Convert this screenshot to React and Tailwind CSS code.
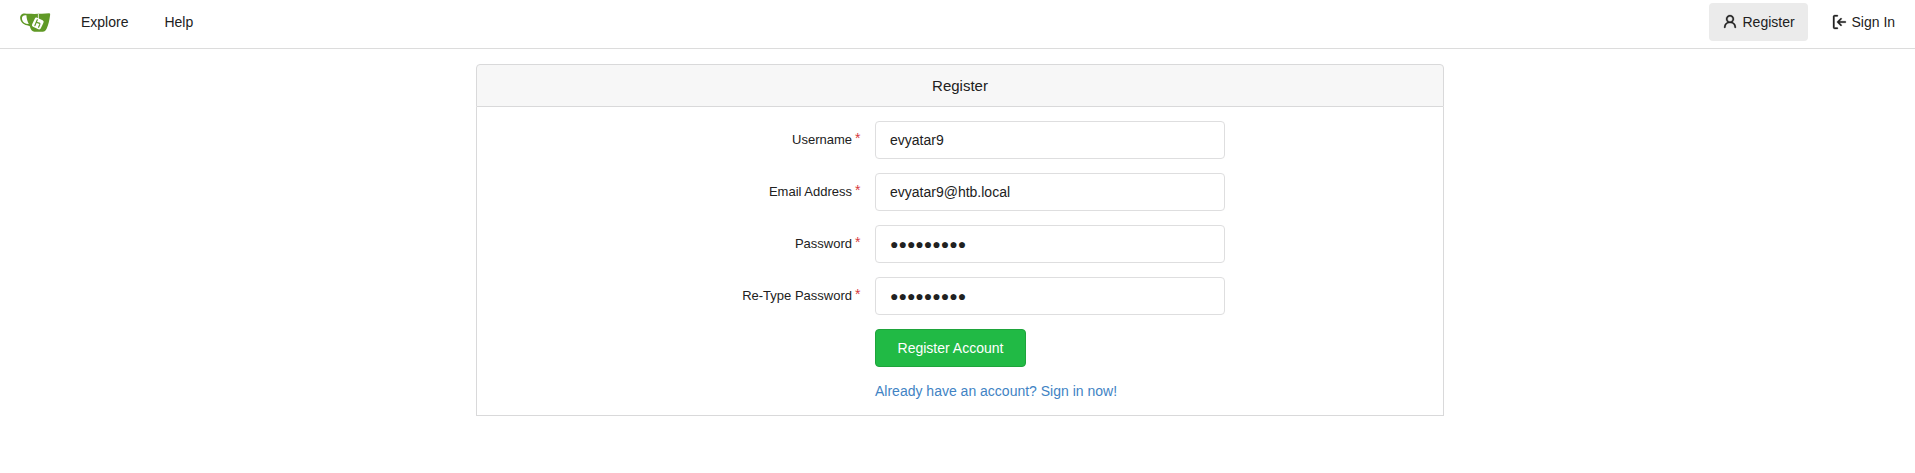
import React from "react";

function Logo() {
  return (
    <svg className="block" width="32" height="20" viewBox="0 0 32 20" aria-hidden="true">
      <path
        d="M5.8 1.6 C10 2 22 2.1 30.2 1.3 C31.2 1.3 31.3 2.2 31.1 3.3 C30.4 8.4 29.4 13 27.6 16.8 C26.6 18.8 25.6 19.7 23.8 19.7 L15.4 19.7 C13.2 19.7 11.6 17.4 10.8 14.2 L9.6 13.7 C5.4 13.3 1.6 10.6 1.2 6.6 C0.9 3.2 3 1.5 5.8 1.6 Z"
        fill="#609926"
      />
      <path d="M7.4 3.3 C4.2 2.9 2.6 4.6 3 7.2 C3.5 10 5.9 11.8 9.8 12.1 C8.5 9.4 7.6 6.6 7.4 3.3 Z" fill="#fff" />
      <path d="M19.4 2 V7" stroke="#fff" strokeWidth="0.8" fill="none" />
      <rect x="14" y="6.6" width="9.6" height="9.8" rx="1.8" fill="#fff" transform="rotate(25 18.8 11.5)" />
      <path
        d="M18.3 7.8 L15.9 13.6 M17.3 10.2 C19.2 11.1 21.4 10.8 20.8 12.4 L19.6 15.2"
        stroke="#609926"
        strokeWidth="1.2"
        fill="none"
        strokeLinecap="round"
      />
    </svg>
  );
}

function Icon({ d }) {
  return (
    <svg
      className="block shrink-0"
      width="16"
      height="16"
      viewBox="0 0 16 16"
      fill="currentColor"
      fillRule="evenodd"
      stroke="currentColor"
      strokeWidth="0.3"
      aria-hidden="true"
    >
      <path d={d} />
    </svg>
  );
}

const PERSON =
  "M10.5 5a2.5 2.5 0 11-5 0 2.5 2.5 0 015 0zm.061 3.073a4 4 0 10-5.123 0 6.004 6.004 0 00-3.431 5.142.75.75 0 001.498.07 4.5 4.5 0 018.99 0 .75.75 0 101.498-.07 6.005 6.005 0 00-3.432-5.142z";
const SIGN_IN =
  "M2 2.75C2 1.784 2.784 1 3.75 1h2.5a.75.75 0 010 1.5h-2.5a.25.25 0 00-.25.25v10.5c0 .138.112.25.25.25h2.5a.75.75 0 010 1.5h-2.5A1.75 1.75 0 012 13.25V2.75zm6.56 4.5h5.69a.75.75 0 010 1.5H8.56l1.97 1.97a.75.75 0 11-1.06 1.06L6.22 8.53a.75.75 0 010-1.06l3.25-3.25a.75.75 0 111.06 1.06L8.56 7.25z";

const FIELDS = [
  { label: "Username", value: "evyatar9" },
  { label: "Email Address", value: "evyatar9@htb.local" },
  { label: "Password", value: "●●●●●●●●●" },
  { label: "Re-Type Password", value: "●●●●●●●●●" },
];

function Field({ label, value }) {
  return (
    <label className="flex h-[38px]">
      <span className="flex w-[383px] shrink-0 justify-end pt-[9px] text-[13px] leading-[20px]">
        {label}
        <span className="ml-[3px] -mt-[2px] w-[5px] text-[14px] text-[#d63a40]">*</span>
      </span>
      <input
        readOnly
        defaultValue={value}
        className="ml-[15px] h-[38px] w-[350px] rounded-[4px] border border-[#dededf] bg-white px-[14px] text-[14px] text-[#212121] outline-none"
      />
    </label>
  );
}

export default function App() {
  return (
    <div className="min-h-[473px] bg-white font-['Liberation_Sans',Arial,sans-serif] text-[14px] text-[#212121]">
      <nav className="flex h-[49px] justify-between border-b border-[#dcdcdc] pl-[19px] pr-[7px] pt-[3px]">
        <div className="flex h-[38px] items-center">
          <Logo />
          <a className="ml-[30px] leading-[20px]">Explore</a>
          <a className="ml-[36px] leading-[20px]">Help</a>
        </div>
        <div className="flex h-[38px]">
          <a className="flex h-[38px] w-[99px] items-center gap-[4.5px] rounded-[4px] bg-[#ebebeb] pl-[13px]">
            <Icon d={PERSON} />
            Register
          </a>
          <a className="flex h-[38px] w-[100px] items-center gap-[4.5px] pl-[23px]">
            <Icon d={SIGN_IN} />
            Sign In
          </a>
        </div>
      </nav>

      <main className="ml-[476px] mt-[15px] w-[968px]">
        <h4 className="h-[43px] rounded-t-[4px] border border-[#d9d9da] bg-[#f7f7f7] text-center text-[15px] leading-[42px]">
          Register
        </h4>
        <form className="flex h-[309px] flex-col gap-[14px] border border-t-0 border-[#d9d9da] pt-[14px]">
          {FIELDS.map((f) => (
            <Field key={f.label} {...f} />
          ))}
          <button
            type="button"
            className="ml-[398px] h-[38px] w-[151px] shrink-0 rounded-[4px] border border-[#1ea43b] bg-[#21ba45] text-[14px] text-white"
          >
            Register Account
          </button>
          <a className="ml-[398px] leading-[20px] text-[#4183c4]">Already have an account? Sign in now!</a>
        </form>
      </main>
    </div>
  );
}
